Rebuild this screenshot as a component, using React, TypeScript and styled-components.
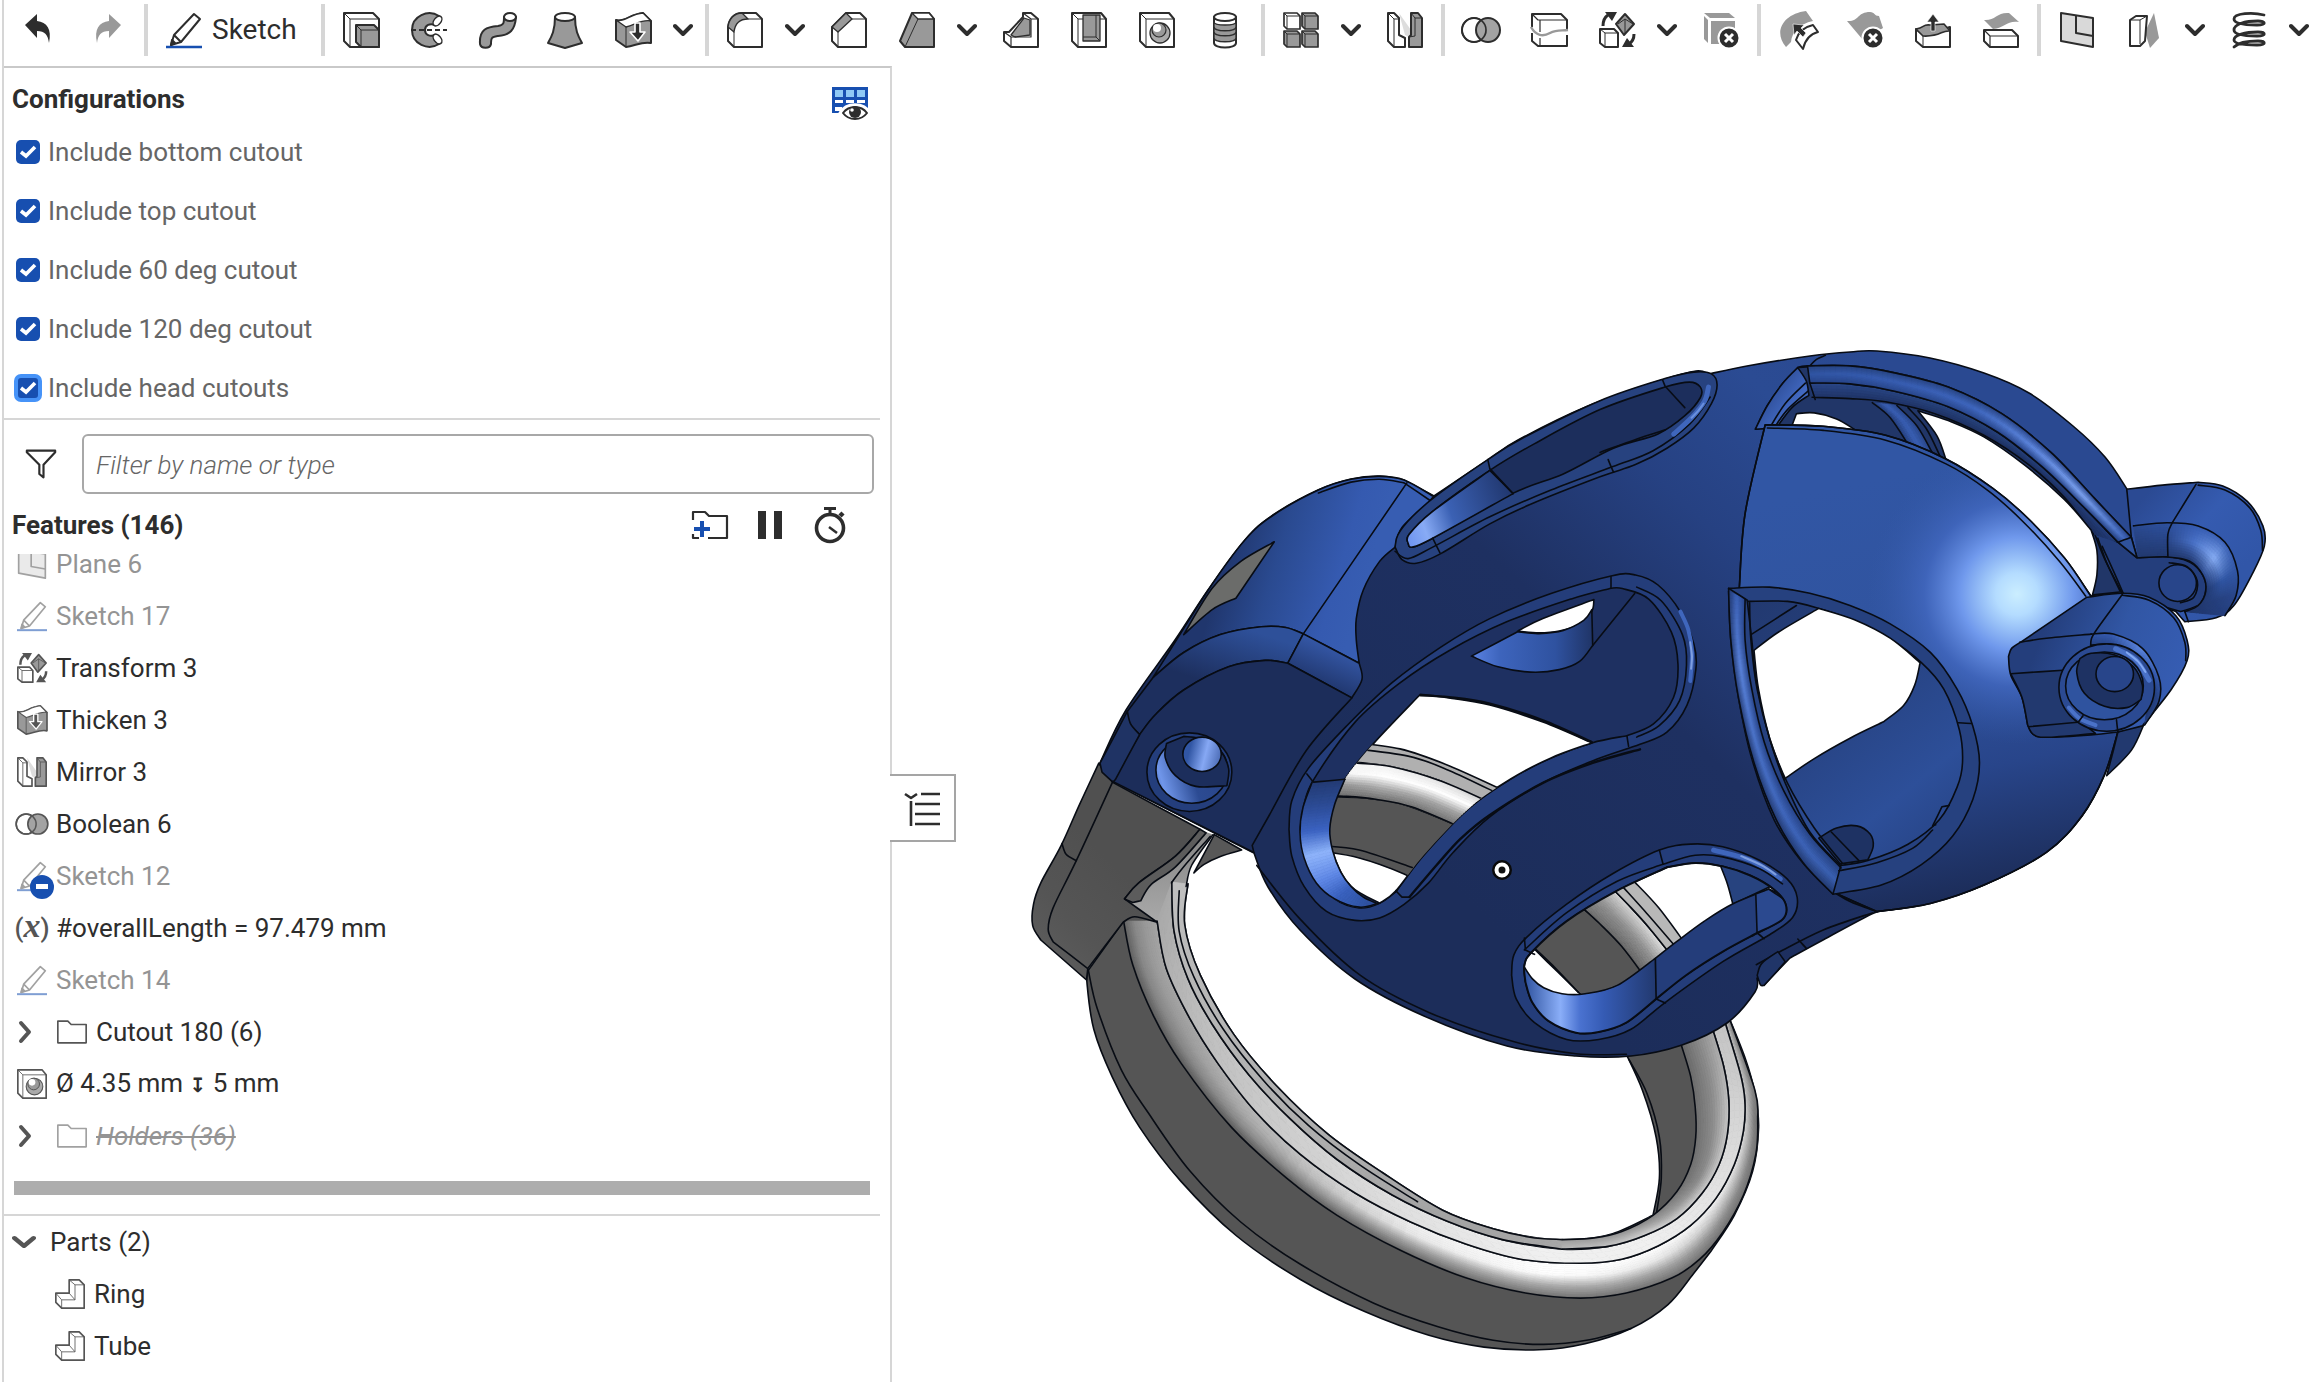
import React from 'react';
import styled, { createGlobalStyle } from 'styled-components';

const INK = '#2d2d2d';
const MUTED = '#949494';
const BLUE = '#174fb0';

const Global = createGlobalStyle`
  *, *::before, *::after { box-sizing: border-box; }
  body { margin: 0; background: #fff; color: ${INK}; font: 400 26px/32px Roboto, "Noto Sans", sans-serif; overflow-x: hidden; }
  button { font: inherit; color: inherit; background: none; border: 0; padding: 0; cursor: pointer; }
`;

/* ---------- layout ---------- */

const Page = styled.div`
  display: flex;
  flex-direction: column;
  min-height: 100vh;
  margin-left: 2px;
  border-left: 2px solid #d6d6d6;
  overflow: hidden;
`;
const Toolbar = styled.header`
  display: flex;
  align-items: center;
  height: 66px;
  padding-bottom: 6px;
`;
const Divider = styled.span`
  flex: none;
  width: 4px;
  height: 52px;
  margin: 0 2px;
  background: #d6d6d6;
`;
const ToolButton = styled.button<{ $faded?: boolean }>`
  flex: none;
  display: grid;
  place-items: center;
  width: 68px;
  height: 60px;
  color: ${p => (p.$faded ? '#999' : INK)};
`;
const History = styled.div`
  display: flex;
  gap: 2px;
`;
const SketchButton = styled.button`
  flex: none;
  display: flex;
  align-items: center;
  gap: 10px;
  width: 169px;
  height: 60px;
  padding-left: 16px;
  font-size: 28px;
`;
const MenuButton = styled.button`
  flex: none;
  width: 36px;
  height: 60px;
  padding: 0 10px 0 6px;
  display: grid;
  place-items: center;
`;
const Body = styled.div`
  flex: 1;
  display: flex;
  align-items: stretch;
`;
const Panel = styled.aside`
  position: relative;
  flex: 0 0 888px;
  display: flex;
  flex-direction: column;
  border-top: 2px solid #c9c9c9;
  border-right: 2px solid #d6d6d6;
`;
const Section = styled.section<{ $last?: boolean }>`
  margin-right: 10px;
  border-bottom: ${p => (p.$last ? 'none' : '2px solid #d6d6d6')};
`;
const ConfigHead = styled.div`
  display: flex;
  align-items: flex-end;
  justify-content: space-between;
  padding: 9px 12px 3px 8px;
`;
const Heading = styled.h2`
  margin: 0;
  font-size: 26px;
  line-height: 44px;
  font-weight: 700;
`;
const IconButton = styled.button`
  display: grid;
  place-items: center;
  width: 36px;
  height: 36px;
`;
const Options = styled.div`
  display: flex;
  flex-direction: column;
  gap: 35px;
  padding: 16px 12px 18px;
`;
const Option = styled.label`
  display: flex;
  align-items: center;
  gap: 8px;
  height: 24px;
  color: #666;
`;
const Tick = styled.span`
  display: grid;
  width: 24px;
  height: 24px;
  > * { grid-area: 1 / 1; }
  svg { pointer-events: none; }
`;
const Box = styled.input<{ $focused?: boolean }>`
  appearance: none;
  width: 24px;
  height: 24px;
  margin: 0;
  border-radius: 5px;
  background: ${BLUE};
  outline: ${p => (p.$focused ? '4px solid #4693f8' : 'none')};
  outline-offset: -2px;
`;
const FilterRow = styled.div`
  display: flex;
  align-items: center;
  gap: 26px;
  padding: 14px 6px 0 22px;
`;
const FilterInput = styled.input`
  flex: 1;
  min-width: 0;
  height: 60px;
  padding: 2px 12px 0;
  border: 2px solid #a8a8a8;
  border-radius: 6px;
  font: italic 300 26px/32px Roboto, "Noto Sans", sans-serif;
  color: ${INK};
  &::placeholder { color: #666; opacity: 1; }
`;
const FeatureHead = styled.div`
  display: flex;
  align-items: center;
  justify-content: space-between;
  height: 60px;
  padding: 2px 32px 0 8px;
`;
const HeadTools = styled.div`
  display: flex;
  gap: 24px;
`;
const Scroller = styled.div`
  overflow: hidden;
`;
const Tree = styled.ul<{ $scrolled?: boolean }>`
  list-style: none;
  margin: ${p => (p.$scrolled ? '-16px 0 0' : '0')};
  padding: 0;
`;
const Item = styled.li<{ $muted?: boolean; $struck?: boolean; $indent?: boolean }>`
  display: flex;
  align-items: center;
  gap: 9px;
  height: 52px;
  padding-left: ${p => (p.$indent ? '50px' : '12px')};
  color: ${p => (p.$muted ? MUTED : INK)};
  span {
    line-height: 20px;
    font-style: ${p => (p.$struck ? 'italic' : 'normal')};
    text-decoration: ${p => (p.$struck ? 'line-through' : 'none')};
  }
`;
const Depth = styled.b`
  font: 700 20px/20px "DejaVu Sans", sans-serif;
`;
const Glyph = styled.i<{ $muted?: boolean }>`
  position: relative;
  display: grid;
  place-items: center;
  width: 31px;
  height: 31px;
  color: #555;
  opacity: ${p => (p.$muted ? 0.55 : 1)};
  font-style: normal;
`;
const Slot = styled.i`
  position: relative;
  display: block;
`;
const Badge = styled.b`
  position: absolute;
  left: 14px;
  top: 14px;
  width: 24px;
  height: 24px;
  border-radius: 50%;
  background: ${BLUE};
  display: grid;
  place-items: center;
  &::after { content: ""; width: 12px; height: 5px; background: #fff; }
`;
const Twist = styled.button`
  display: grid;
  place-items: center;
  width: 31px;
  height: 31px;
  padding-right: 14px;
  color: #555;
`;
const Variable = styled.i`
  width: 36px;
  margin: 0 -3px 0 -2px;
  font: normal 500 26px/32px Roboto, "Noto Sans", sans-serif;
  color: #555;
  text-align: center;
  white-space: nowrap;
`;
const VariableName = styled.b`
  font: italic 700 34px/28px "Liberation Serif", serif;
`;
const Rollback = styled.div`
  height: 14px;
  margin: 19px 10px 19px;
  background: #adadad;
`;
const PartsHead = styled.button`
  display: flex;
  align-items: center;
  gap: 14px;
  width: 100%;
  height: 52px;
  padding-left: 8px;
`;
const PanelTab = styled.button`
  position: absolute;
  left: 100%;
  top: 706px;
  width: 66px;
  height: 68px;
  padding-top: 4px;
  display: grid;
  place-items: center;
  background: #fff;
  border: 2px solid #a5a5a5;
  border-left: 0;
`;
const Viewport = styled.main`
  flex: 1;
  min-width: 0;
  svg { display: block; width: 100%; height: auto; }
`;

/* ---------- icons ---------- */

type P = { n: string; s?: number };
const G = '#999';
const icons: Record<string, React.ReactNode> = {
  undo: <path d="M5 13 17 2v7c10 1 15 8 12 22-1-8-4-12-12-12v7z" fill="currentColor" stroke="none" />,
  redo: <path d="M31 13 19 2v7C9 10 4 17 7 31c1-8 4-12 12-12v7z" fill="currentColor" stroke="none" />,
  pencil: <><path d="M28 2 34 7 15 30 5 33 8 23z M8 23l7 7" /><path d="M0 35h36" stroke={BLUE} strokeWidth="2.4" /><path d="m5 33 1-5 3 3z" fill="currentColor" /></>,
  extrude: <><path d="M1 1h29l6 6v28H7l-6-6z" fill="#fff" /><path d="m1 1 6 6h29M7 7v28" strokeWidth="1" /><path d="M13 13h18l5 5v17H18l-5-5z" fill={G} /><path d="m13 13 5 5h18M18 18v17" strokeWidth="1" /></>,
  revolve: <><path d="M28 4C17-3 1 4 1 18s16 21 27 14l-4-9c-5 2-10 0-10-5s5-7 10-5z" fill={G} /><ellipse cx="26.500" cy="9" rx="3.400" ry="5.600" transform="rotate(38 26.500 9)" fill="#fff" strokeWidth="1.500" /><ellipse cx="26.500" cy="27" rx="3.400" ry="5.600" transform="rotate(-38 26.500 27)" fill="#fff" strokeWidth="1.500" /><path d="M0 18h36" strokeDasharray="5 3" /></>,
  sweep: <><path d="M25 5c0 6 0 8-6 9C8 15 0 17 1 32c1 5 10 5 11 0 0-7 1-7 7-8 12-1 17-6 18-19z" fill={G} /><ellipse cx="31" cy="5" rx="6" ry="4" fill="#fff" /></>,
  loft: <><path d="M8 5C8 18 5 24 1 31l17 5 17-5C31 24 28 18 28 5z" fill={G} /><ellipse cx="18" cy="5" rx="10" ry="4" fill="#fff" /></>,
  thicken: <><path d="M1 8C9 11 15 2 28 1l8 8v22c-9-2-16 3-25 4L1 28z" fill={G} /><path d="M1 8C9 11 15 2 28 1l8 8c-9-2-16 4-25 6z" fill="#fff" strokeWidth="1.3" /><path d="M11 15v20" strokeWidth="1" /><path d="M20 11h5v9h5l-7 9-8-9h5z" fill="currentColor" stroke="#fff" strokeWidth="1.6" /></>,
  fillet: <><path d="M1 15C2 7 7 1 15 1h14l6 6v28H7l-6-6z" fill="#fff" /><path d="M1 15C2 7 7 1 15 1l6 6C12 7 8 12 7 20z" fill={G} strokeWidth="1.3" /><path d="M21 7h14M7 20v15" strokeWidth="1" /></>,
  chamfer: <><path d="M1 15 15 1h14l6 6v28H7l-6-6z" fill="#fff" /><path d="M1 15 15 1l6 6L7 20z" fill={G} strokeWidth="1.3" /><path d="M21 7h14M7 20v15" strokeWidth="1" /></>,
  draft: <><path d="M13 1h17l5 6v28H6l-5-6z" fill={G} /><path d="M13 1h17l5 6H19z" fill="#fff" strokeWidth="1.3" /><path d="M19 7 6 35" strokeWidth="1" /></>,
  rib: <><path d="M20 1h8l7 6v28H8l-7-6V20h5L20 5z" fill="#fff" /><path d="M8 23 21 6l6 2v15l-15 2z" fill={G} strokeWidth="1.3" /><path d="M28 7h7M20 1l8 6v18H8l-7-5M8 25v10" strokeWidth="1.2" /></>,
  shell: <><path d="M1 1h29l5 6v28H7l-6-6z" fill="#fff" /><path d="M12 3h17v26H12z" fill={G} strokeWidth="1.3" /><path d="M12 25h13l4 4M25 3v22M1 1l6 6h5M29 7h6M7 7v28" strokeWidth="1" /></>,
  hole: <><path d="M1 1h29l5 6v28H7l-6-6z" fill="#fff" /><path d="m1 1 6 6h28M7 7v28" strokeWidth="1" /><circle cx="21" cy="21" r="10" fill="#aaa" strokeWidth="1.3" /><circle cx="20" cy="18" r="7" fill={G} strokeWidth="1.2" /><circle cx="18" cy="16" r="4" fill="#fff" stroke="none" /></>,
  thread: <><path d="M7 5v26c0 6 22 6 22 0V5z" fill="#fff" /><path d="M7 10v16c0 5 22 5 22 0V10c0 4-22 4-22 0z" fill={G} strokeWidth="1.4" /><ellipse cx="18" cy="5" rx="11" ry="4" fill="#fff" /><path d="M7 15c0 5 22 5 22 0M7 20c0 5 22 5 22 0" strokeWidth="1.4" /></>,
  pattern: <>{[[1, 1, '#fff'], [19, 1, G], [1, 19, G], [19, 19, G]].map(([x, y, f]) => <g key={`${x}-${y}`} strokeWidth="1.7" transform={`translate(${x} ${y})`}><path d="M0 0h13l3 3v13H3l-3-3z" fill={f as string} /><path d="m0 0 3 3h13M3 3v13" strokeWidth="1" /></g>)}</>,
  mirror: <><path d="M12 1 24 18v8l-6-3z" fill="#ddd" stroke="none" /><path d="M1 1h6l5 5v17l6 3v9H7l-6-6z" fill="#fff" /><path d="m1 1 6 6h5M7 7v28" strokeWidth="1" /><path d="M24 1h7l4 5v29H22V25l2-2z" fill={G} /><path d="M24 1l4 5h7M28 6v18l-6 1" strokeWidth="1" /></>,
  boolean: <><circle cx="11" cy="18" r="12" fill="#fff" /><circle cx="25" cy="18" r="12" fill={G} fillOpacity=".9" /><circle cx="11" cy="18" r="12" fill="none" strokeWidth="1.6" /></>,
  split: <><path d="M1 15V2h29l6 6v10M1 21v8l6 5h29V23" /><path d="m1 2 6 6h29M9 8v12M9 26v8" strokeWidth="1.2" /><path d="M0 15c5 9 12 10 19 6s12-2 18-3" stroke={G} strokeWidth="2.400" /></>,
  transform: <><path d="M1 17h14l4 4v14H6l-5-4z" fill="#fff" /><path d="m1 17 5 4h13M6 21v14" strokeWidth="1" /><path d="m26 2 9 10-10 11-8-11z" fill={G} /><path d="m19 12 7-5 8 5M26 7v15" strokeWidth="1" /><path d="M4 14C4 9 6 5 9 3M35 22c0 5-2 8-5 10" strokeWidth="3" /><path d="M6 0h12l-5 9zM23 35h12l-7-9z" fill="currentColor" strokeWidth="0" /></>,
  deletePart: <><path d="M1 1h25l6 5H7z" fill={G} stroke="none" /><path d="m1 4 4 4v23l-4-4zM8 9h24v23H8z" fill={G} stroke="none" /><circle cx="26" cy="26" r="10.500" fill="currentColor" stroke="#fff" /><path d="m22 22 8 8m0-8-8 8" stroke="#fff" strokeWidth="3" /></>,
  modify: <><path d="M7 35C-6 20 4 2 27-1l7 10C20 12 13 20 12 30z" fill={G} stroke="none" /><path d="M34 13 39 20c-8 2-13 8-15 17l-7-9c2-7 8-13 17-15z" fill="#fff" /><path d="m14 12 11 1-3 3 5 5-3 4-6-6-3 4z" fill="currentColor" stroke="#fff" strokeWidth=".6" /></>,
  deleteFace: <><path d="M0 9C12 10 10 0 23 0c5 0 4 4 9 4l4 12-20 12z" fill={G} stroke="none" /><circle cx="26" cy="26" r="10.500" fill="currentColor" stroke="#fff" /><path d="m22 22 8 8m0-8-8 8" stroke="#fff" strokeWidth="3" /></>,
  move: <><path d="M1 17 8 23l27-8v20H8l-7-6z" fill="#fff" /><path d="M1 17c9-1 6-5 14-4l14-1 6 7c-9-1-9 6-27 5z" fill={G} strokeWidth="1.600" /><path d="M8 24v11" strokeWidth="1" /><path d="m18 2 6 8h-4v9h-4v-9h-4z" fill="currentColor" stroke="#fff" strokeWidth=".6" /></>,
  replace: <><path d="M1 18h28l6 6v11H7l-6-6z" fill="#fff" /><path d="m1 18 6 6h28M7 24v11" strokeWidth="1.2" /><path d="M1 8C12 9 14 0 26 1l10 9c-12-2-14 6-26 7z" fill={G} stroke="none" /></>,
  plane: <><path d="m2 1 32 5v29L2 29z" fill="#d9d9d9" /><path d="M17 4v17l17 3" /></>,
  curve: <><path d="m27 1 5 25-9 10-5-16z" fill={G} stroke="none" /><path d="M9 4h11l-1 12-1 13-5 5H3V8z" fill="#fff" /><path d="M3 8h10l7-4M13 8v24" strokeWidth="1" /></>,
  helix: <path d="M33 3C22 0 3 1 3 7c0 5 12 6 23 6 10 0 9-4 1-4C14 9 3 12 3 18c0 5 12 6 23 6 10 0 9-4 1-4C14 20 3 23 3 28c0 4 12 5 23 5 10 0 9-4 1-4-10 0-20 2-24 6" strokeWidth="2.800" strokeLinecap="round" />,
  folder: <path d="M1 5h12l4 4h18v22H1z" />,
  part: <><path d="M17 1h12l6 6v28H8l-7-7V17h16z" fill="#fff" /><path d="m17 1 7 6h11M24 7v18l-7-8M24 25H8l-7-8M8 25v10" strokeWidth="1" /></>,
  funnel: <path d="M1 2h34v2L21 19v15l-5-4V19L1 4z" strokeWidth="2.6" />,
  table: <><path d="M0 2h36v26H0z" fill={BLUE} stroke="none" /><path d="M3 5h8v7H3zM14 5h8v7h-8zM25 5h8v7h-8z" fill="#8fc9f5" stroke="none" /><path d="M3 15h8v3H3zM14 15h8v3h-8zM25 15h8v3h-8zM3 22h7v4H3z" fill="#fff" stroke="none" /><path d="M8 28C14 17 32 17 38 28c-6 10-24 10-30 0z" fill="#fff" stroke="#fff" strokeWidth="3" /><path d="M11 28c6-8 18-8 24 0-6 8-18 8-24 0z" fill="#fff" /><circle cx="23" cy="27" r="6" fill={INK} stroke="none" /><circle cx="20" cy="25" r="1.8" fill="#fff" stroke="none" /></>,
  addFolder: <><path d="M1 13V5h12l4 4h18v22H16M7 31H1v-4" strokeWidth="2.2" /><path d="M10 14v16M2 22h16" stroke={BLUE} strokeWidth="4" /></>,
  pause: <path d="M6 4h8v28H6zM22 4h8v28h-8z" fill="currentColor" stroke="none" />,
  watch: <><circle cx="18" cy="21" r="13.5" strokeWidth="3.6" /><path d="M12 1.500h12M18 2v5" strokeWidth="3" /><path d="m28 9 3-3" strokeWidth="4.500" /><path d="m17 20 8 6" strokeWidth="2.500" /></>,
  list: <path d="M1 2l6 4 6-4M7 9v25M17 2h19M11 12h25M11 22h25M11 32h25" strokeWidth="2.600" />,
};
const Icon = ({ n, s = 36 }: P) => (
  <svg width={s} height={s} viewBox="0 0 36 36" fill="none" stroke="currentColor" strokeWidth="2" strokeLinejoin="round" overflow="visible" aria-hidden="true">{icons[n]}</svg>
);
const Chevron = ({ right, wide }: { right?: boolean; wide?: boolean }) => (
  <svg width={right ? 14 : wide ? 24 : 20} height={right ? 24 : 14} viewBox={right ? '0 0 14 24' : '0 0 20 14'} fill="none" stroke={wide ? '#555' : 'currentColor'} strokeWidth="4" strokeLinecap="round" strokeLinejoin="round" preserveAspectRatio="none" aria-hidden="true">
    <path d={right ? 'M3 3l8 9-8 9' : 'M2 3l8 8 8-8'} />
  </svg>
);

/* ---------- model drawing ---------- */

type Pt = [number, number];
type Frame = { x: number; y: number; sx: number; sy: number };
// Each view frame has its own local grid; points are mapped from it to model space.
const W: Frame = { x: 0, y: 0, sx: 1, sy: 1 };
const CLASP: Frame = { x: 1000, y: 440, sx: 2.45, sy: 2.8 };
const HEAD: Frame = { x: 1600, y: 330, sx: 2.24, sy: 2.45 };
const RING: Frame = { x: 1080, y: 840, sx: 2.178, sy: 2.958 };

const parse = (f: Frame, s: string): Pt[] =>
  s.trim().split(/\s+/).map(p => {
    const [a, b] = p.split(',').map(Number);
    return [f.x + a / f.sx, f.y + b / f.sy] as Pt;
  });
const r1 = (v: number) => Math.round(v * 10) / 10;
// Smooth curve through the points; "|" marks a sharp corner.
function curve(f: Frame, s: string): string {
  let out = '';
  let last: Pt | null = null;
  s.split('|').filter(t => t.trim()).forEach(seg => {
    let p = parse(f, seg);
    if (last) p = [last, ...p];
    else out = `M${r1(p[0][0])} ${r1(p[0][1])}`;
    for (let i = 0; i < p.length - 1; i++) {
      const a = p[Math.max(0, i - 1)], b = p[i], c = p[i + 1], d = p[Math.min(p.length - 1, i + 2)];
      out += `C${r1(b[0] + (c[0] - a[0]) / 6)} ${r1(b[1] + (c[1] - a[1]) / 6)} ${r1(c[0] - (d[0] - b[0]) / 6)} ${r1(c[1] - (d[1] - b[1]) / 6)} ${r1(c[0])} ${r1(c[1])}`;
    }
    last = p[p.length - 1];
  });
  return out;
}
const Face = ({ f, d, fill, line = true }: { f: Frame; d: string; fill: string; line?: boolean }) => (
  <path d={curve(f, d) + 'Z'} fill={fill} stroke={line ? '#080c14' : 'none'} />
);
const Edge = ({ f, d, w = 1.6, c = '#080c14' }: { f: Frame; d: string; w?: number; c?: string }) => (
  <path d={curve(f, d)} fill="none" stroke={c} strokeWidth={w} strokeLinecap="round" />
);
const Oval = ({ f, x, y, rx, ry, fill = 'none' }: { f: Frame; x: number; y: number; rx: number; ry: number; fill?: string }) => (
  <ellipse cx={f.x + x / f.sx} cy={f.y + y / f.sy} rx={rx / f.sx} ry={ry / f.sy} fill={fill} stroke="#080c14" />
);

const rail = (p: Pt[], n: number): Pt[] =>
  Array.from({ length: n + 1 }, (_, k) => {
    const t = (k / n) * (p.length - 1);
    const i = Math.min(p.length - 2, Math.floor(t));
    const u = t - i;
    const a = p[Math.max(0, i - 1)], b = p[i], c = p[i + 1], d = p[Math.min(p.length - 1, i + 2)];
    const h = (j: 0 | 1) =>
      0.5 * (2 * b[j] + (c[j] - a[j]) * u + (2 * a[j] - 5 * b[j] + 4 * c[j] - d[j]) * u * u + (3 * b[j] - a[j] - 3 * c[j] + d[j]) * u * u * u);
    return [h(0), h(1)] as Pt;
  });
const rgb = (h: string) => [1, 3, 5].map(i => parseInt(h.slice(i, i + 2), 16));
const mix = (a: number[], b: number[], t: number) => a.map((v, i) => v + (b[i] - v) * t);
const pick = (row: number[][], t: number) => {
  if (row.length === 1) return row[0];
  const u = t * (row.length - 1);
  const i = Math.min(row.length - 2, Math.floor(u));
  return mix(row[i], row[i + 1], u - i);
};
// Shaded surface between two rails. Each tone row runs across, rows run along.
function Loft({ f, a, b, tones, n = 60, m = 14 }: { f: Frame; a: string; b: string; tones: string[]; n?: number; m?: number }) {
  const A = rail(parse(f, a), n), B = rail(parse(f, b), n);
  const rows = tones.map(t => t.split(' ').map(rgb));
  const cells: React.ReactNode[] = [];
  const at = (k: number, v: number): Pt => [A[k][0] + (B[k][0] - A[k][0]) * v, A[k][1] + (B[k][1] - A[k][1]) * v];
  for (let k = 0; k < n; k++) {
    for (let j = 0; j < m; j++) {
      const t = rows.length === 1 ? 0 : ((k + 0.5) / n) * (rows.length - 1);
      const i = Math.min(Math.max(rows.length - 2, 0), Math.floor(t));
      const v = (j + 0.5) / m;
      const c = rows.length === 1 ? pick(rows[0], v) : mix(pick(rows[i], v), pick(rows[i + 1], v), t - i);
      const col = `rgb(${c.map(Math.round).join(',')})`;
      const q = [at(k, j / m), at(k + 1, j / m), at(k + 1, (j + 1) / m), at(k, (j + 1) / m)];
      cells.push(<path key={`${k}-${j}`} d={'M' + q.map(p => p.map(r1).join(' ')).join('L') + 'Z'} fill={col} stroke={col} strokeWidth="0.8" />);
    }
  }
  return <g>{cells}<Edge f={f} d={a} /><Edge f={f} d={b} /></g>;
}

const Lin = ({ id, x1, y1, x2, y2, stops }: { id: string; x1: number; y1: number; x2: number; y2: number; stops: string }) => (
  <linearGradient id={id} gradientUnits="userSpaceOnUse" x1={x1} y1={y1} x2={x2} y2={y2}>
    {stops.split(' ').map(s => { const [o, c] = s.split(':'); return <stop key={o} offset={o} stopColor={c} />; })}
  </linearGradient>
);

const OPEN_BIG = '735,1090 745,1020 770,948 870,790 980,680 1100,590 1240,510 1400,445 1497,415|1525,416 1590,446 1645,538 1661,629 1650,721 1601,795 1536,828|1450,848 1350,890 1250,950 1150,1030 1040,1160 970,1265|930,1297 880,1310 820,1285 765,1215 735,1090';
const GAP_BIG = '1030,712 915,850 845,950 815,1030 808,1090 820,1170 860,1250 930,1297|970,1262 1040,1160 1150,1030 1250,950 1350,890 1450,848|1330,790 1200,742 1100,722 1030,712';
const OPEN_LOW = '970,420 968,370 985,330 1060,240 1170,150 1280,80|1340,68 1400,78 1460,105 1510,145 1537,190 1530,235 1475,275|1400,330 1320,400 1255,470|1190,540 1130,568 1080,570 1020,535 985,480 970,420';
const DOME = '370,232|500,236 640,258 775,316 880,388 960,463 1040,558 1097,648|1160,800|1160,985|1130,1090 1080,1190 1000,1280 860,1360 740,1405 620,1425|528,1380|400,1000|312,632|325,450 370,232';

function Model() {
  return (
    <svg viewBox="892 66 1424 1316" preserveAspectRatio="xMinYMin meet" strokeWidth="1.6" strokeLinejoin="round" role="img" aria-label="Ring and tube assembly">
      <defs>
        <Lin id="tube" x1={1420} y1={860} x2={1880} y2={360} stops="0:#1c2d5a 0.4:#1e3061 0.65:#264182 0.85:#2b4b93 1:#2a4991" />
        <radialGradient id="glow" gradientUnits="userSpaceOnUse" cx="2017" cy="594" r="150">
          <stop offset="0" stopColor="#cbeeff" /><stop offset=".14" stopColor="#b4dcff" /><stop offset=".38" stopColor="#6f98ec" /><stop offset=".62" stopColor="#4268c0" stopOpacity=".8" /><stop offset="1" stopColor="#3358a8" stopOpacity="0" />
        </radialGradient>
        <Lin id="dome" x1={1870} y1={480} x2={1960} y2={895} stops="0:#3156a4 0.45:#30539e 0.72:#28458a 1:#1c2d5a" />
        <Lin id="top" x1={1225} y1={560} x2={1360} y2={600} stops="0:#20366d 0.35:#2a4a90 0.8:#355ab0 1:#375db2" />
        <Lin id="band" x1={1250} y1={630} x2={1230} y2={690} stops="0:#2e5099 1:#1d2f5e" />
        <Lin id="bandR" x1={1345} y1={640} x2={1325} y2={688} stops="0:#3a60b5 1:#20366d" />
        <Lin id="lens" x1={1700} y1={560} x2={1960} y2={880} stops="0:#203568 0.45:#26417f 0.75:#2d4f99 1:#243e7c" />
        <Lin id="slotLit" x1={1400} y1={530} x2={1512} y2={490} stops="0:#6a90ee 0.2:#88abf5 0.45:#3b61b4 1:#20366d" />
        <Lin id="bore" x1={1182} y1={780} x2={1222} y2={790} stops="0:#3156a4 0.4:#86a8f4 1:#2b4a92" />
        <Lin id="well" x1={1150} y1={800} x2={1215} y2={780} stops="0:#3156b0 0.25:#7096ea 0.7:#2c4b93 1:#2a478c" />
        <Lin id="hump" x1={1470} y1={650} x2={1592} y2={650} stops="0:#5c84e4 0.25:#3d64bc 0.7:#2f52a0 1:#203568" />
        <Lin id="lowLit" x1={1525} y1={1000} x2={1656} y2={1000} stops="0:#2f539f 0.27:#8aaef8 0.42:#4a72d0 0.6:#355bb4 1:#22396f" />
        <Lin id="cap" x1={1760} y1={400} x2={1800} y2={430} stops="0:#2c4b93 0.6:#4269c2 1:#2c4b93" />
        <Lin id="ear" x1={2150} y1={490} x2={2240} y2={570} stops="0:#2b4a93 0.5:#355bb0 1:#3156a8" />
        <Lin id="ear2" x1={2040} y1={640} x2={2190} y2={700} stops="0:#243e7c 0.45:#3156a4 1:#375eb6" />
        <Lin id="arm" x1={1050} y1={1000} x2={1150} y2={900} stops="0:#606060 0.5:#555555 1:#505050" />
        <Lin id="inner" x1={1180} y1={1000} x2={1180} y2={850} stops="0:#c9c9c9 1:#8c8c8c" />
        <clipPath id="gapBig"><path d={curve(CLASP, GAP_BIG)} /></clipPath>
        <clipPath id="openLow"><path d={curve(RING, OPEN_LOW)} /></clipPath>
      </defs>

      {/* ring */}
      <Face f={RING} fill="#555555" d="18,385 15,420 30,560 70,700 130,850 220,1010 340,1170 480,1300 620,1395 760,1465 880,1500 1000,1508 1100,1490 1200,1445 1280,1375 1335,1285 1375,1215|1425,1110 1465,980 1478,850 1470,750 1450,650 1415,530|1185,620|1225,740 1255,880 1262,1000 1248,1110|1160,1165 1080,1182 1000,1178 900,1150 790,1095 660,985 540,870 430,730 335,575 262,400 228,250 235,130|95,240" />
      <Edge f={RING} d="18,385 38,500 90,680 150,810 240,980 350,1130 480,1255 640,1370 780,1440 900,1480 1010,1492 1110,1478 1200,1445" />
      <Face f={CLASP} fill="#585858" d="525,1105|592,1148|540,1166 500,1188 475,1212" />
      <Face f={CLASP} fill="url(#inner)" d="522,1105 470,1190 456,1250 455,1340|440,1400|385,1350|305,1285|345,1290|370,1245 430,1180 490,1092" line={false} />
      <Loft f={RING} n={90} m={16}
        a="95,240 115,370 160,520 220,660 330,850 450,1000 560,1110 700,1215 840,1295 970,1340 1090,1355 1190,1340 1290,1295 1350,1240 1400,1160 1445,1050 1472,930 1476,830 1470,740 1415,530"
        b="168,240 188,380 240,530 300,660 380,800 480,930 600,1045 720,1130 840,1195 960,1240 1090,1252 1180,1240 1260,1200 1330,1140 1385,1060 1425,960 1445,860 1448,770 1438,690 1405,540"
        tones={['#606060 #8a8a8a #9a9a9a #a4a4a4', '#5a5a5a #858585 #9c9c9c #a8a8a8', '#5a5a5a #909090 #b0b0b0 #c0c0c0', '#666666 #a0a0a0 #e8e8e8 #f0f0f0', '#707070 #aaaaaa #ffffff #ffffff', '#707070 #a0a0a0 #e8e8e8 #ffffff', '#707070 #8e8e8e #c0c0c0 #f2f2f2', '#707070 #808080 #a8a8a8 #d0d0d0', '#777777 #8c8c8c #a8a8a8 #bababa']} />
      <Loft f={RING} n={90} m={3}
        a="168,240 188,380 240,530 300,660 380,800 480,930 600,1045 720,1130 840,1195 960,1240 1090,1252 1180,1240 1260,1200 1330,1140 1385,1060 1425,960 1445,860 1448,770 1438,690 1405,540"
        b="200,125 205,270 235,410 288,545 368,695 458,825 560,945 680,1050 800,1128 920,1182 1050,1210 1150,1202 1230,1170 1300,1120 1355,1045 1392,960 1410,870 1413,770 1402,670 1378,560"
        tones={['#a8a8a8', '#bcbcbc', '#cccccc', '#e0e0e0', '#f0f0f0', '#f0f0f0', '#e2e2e2', '#d4d4d4', '#c4c4c4']} />
      <Loft f={RING} n={90} m={6}
        a="200,125 205,270 235,410 288,545 368,695 458,825 560,945 680,1050 800,1128 920,1182 1050,1210"
        b="235,130 228,250 262,400 335,575 430,730 540,870 660,985 790,1095 900,1150 980,1175 1050,1182"
        tones={['#c0c0c0', '#b8b8b8', '#b0b0b0', '#a4a4a4', '#a8a8a8']} />
      <Loft f={RING}
        a="1050,1210 1150,1202 1230,1170 1300,1120 1355,1045 1392,960 1410,870 1413,770 1402,670 1378,560"
        b="1050,1182 1120,1177 1180,1158 1248,1110 1300,1040 1330,960 1341,880 1340,790 1330,700 1308,600"
        tones={['#b8b8b8 #a0a0a0', '#d8d8d8 #909090', '#d0d0d0 #8a8a8a #707070', '#c8c8c8 #8c8c8c #707070', '#a8a8a8 #8a8a8a #686868']} />
      <Edge f={RING} d="216,150 216,270 248,405 312,560 400,712 498,845 610,962 735,1070" />
      <Edge f={RING} d="1196,650 1235,750 1262,880 1266,1000 1256,1100" />

      {/* ring arm and clasp base */}
      <Edge f={CLASP} d="522,1105 470,1190 456,1250" />
      <Edge f={CLASP} d="515,1110 450,1195 420,1240" />
      <Face f={CLASP} fill="url(#arm)" d="242,905|195,1020 150,1135 100,1240 82,1300 80,1360 100,1400|212,1512|215,1480|302,1350|330,1335 385,1350|305,1285|340,1240 430,1165 490,1090|275,958" />
      <Face f={CLASP} fill="#5c5c5c" d="490,1090|430,1165 340,1240 305,1285|325,1295|345,1290|370,1245 430,1195 505,1100" />
      <Edge f={CLASP} d="275,960 187,1178 130,1310 118,1370 130,1405|215,1480" />
      <Edge f={CLASP} d="152,1130 162,1160 187,1178" />

      {/* tube body */}
      <Face f={W} fill="url(#tube)" d="1100,763|1126,710 1175,640 1208,590 1245,540 1273,515 1318,490 1351,479 1380,476 1404,480|1434,496|1488,460 1518,440 1588,406 1662,380 1696,371 1709,374|1747,366 1810,356 1850,352 1877,351 1930,358 1984,373 2029,393 2073,426 2105,457 2127,489|2150,600|2118,732|2104,775 2082,816 2046,852 1984,885 1930,903 1890,910|1874,913 1823,940 1790,958|1764,985|1757,978|1755,992 1727,1023 1682,1045 1631,1056 1576,1056 1507,1046 1424,1016 1355,979 1300,930 1268,887 1254,853|1112,781" />
      <Edge f={RING} d="385,75 480,235 610,400 760,510 940,595 1080,632 1190,634" />
      <Edge f={HEAD} d="528,1380 560,1400 620,1425" />
      <Edge f={HEAD} d="350,1555 400,1525 500,1470 610,1428" />
      <Edge f={HEAD} d="443,1492|462,1515" />
      <Edge f={HEAD} d="470,88 485,72 505,62" />

      {/* clasp */}
      <Face f={CLASP} fill="url(#top)" d="1062,158|990,112 930,102 860,110 780,140 670,210 600,280 510,420 375,665|450,595 540,545 640,523 700,525 743,543|880,625|873,560 873,500 890,420 930,340 968,300|985,245 1050,175" />
      <Edge f={CLASP} d="780,148 860,118 930,110 990,120|1052,168" />
      <Face f={CLASP} fill="url(#band)" d="375,665 450,595 540,545 640,523 700,525 743,543|705,625|650,617 560,635 450,700 380,770 342,825|315,790 312,760" />
      <Face f={CLASP} fill="url(#bandR)" d="743,543|880,625|887,670 862,722|705,625" />
      <Face f={CLASP} fill="#1c2d5a" d="342,825 380,770 450,700 560,635 650,617 705,625|862,722|750,870 660,1050 618,1135|622,1155|275,955" />
      <Face f={CLASP} fill="#1f3364" d="245,905|312,760|320,795 342,825|283,950|275,955 250,930" />
      <Edge f={CLASP} d="997,120|743,543" />
      <Face f={CLASP} fill="#6b6c6a" d="672,285|578,443|520,475 450,545|520,415 590,340 672,285" />
      <Oval f={CLASP} x={464} y={930} rx={104} ry={110} fill="#243e7c" />
      <Oval f={CLASP} x={470} y={925} rx={88} ry={92} fill="url(#well)" />
      <Face f={CLASP} fill="#1c2e5c" d="408,850 405,890 430,940 480,970 556,968|560,920 540,870 500,838 450,830" />
      <Oval f={CLASP} x={495} y={880} rx={47} ry={48} fill="url(#bore)" />

      {/* top slot */}
      <Face f={CLASP} fill="#27427f" d="968,300 975,265 1010,215 1070,155 1195,55 1280,-5 1470,-110 1629,-172 1700,-190 1743,-185 1757,-154 1743,-102 1700,-34 1634,23 1557,69 1470,103 1300,180 1200,235 1080,318 1020,345 985,335 968,300" />
      <Face f={CLASP} fill="#1c2e5c" d="1000,290 1002,265 1060,200 1200,85 1310,10 1470,-85 1629,-148 1689,-162 1716,-148 1716,-119 1678,-68 1612,-17 1503,23 1380,95 1255,150 1060,275 1010,300 1000,290" />
      <Face f={CLASP} fill="url(#slotLit)" d="1000,290 1002,265 1060,200 1200,85|1257,150|1060,275 1010,300 1000,290" />
      <Edge f={CLASP} d="1195,55|1200,80|1257,150" />
      <Edge f={CLASP} d="968,312 1000,332 1060,300 1200,215 1350,140 1500,75 1600,30 1690,-45 1740,-120" />
      <Edge f={HEAD} d="243,140 234,175 205,215 165,255" c="#3f66bc" w={5} />
      <Edge f={HEAD} d="232,180 220,198 205,215" c="#6a90de" w={2} />
      <Edge f={HEAD} d="140,122|146,138|190,190" />
      <Edge f={HEAD} d="0,300 80,268 145,245" />
      <Edge f={CLASP} d="1060,275|1078,316" />
      <Edge f={CLASP} d="1490,55|1503,90" />

      {/* large side opening */}
      <Face f={CLASP} fill="#243d7a" d="708,1090 715,1010 755,920 850,800 960,680 1080,580 1200,500 1350,430 1500,380 1557,378 1612,406 1667,481 1700,572 1705,641 1683,743 1634,818 1568,852 1460,895 1330,960 1200,1055 1110,1155 1050,1240 990,1300 930,1338 870,1345 800,1320 745,1250 715,1165 708,1090" />
      <Edge f={CLASP} d="1003,1280 1070,1190 1130,1115 1200,1050 1330,960 1450,905 1568,866" w={2.4} />
      <Face f={CLASP} fill="#1e3061" d={OPEN_BIG} />
      <Edge f={CLASP} d="1560,412 1620,450 1672,545 1682,630 1665,730 1615,800 1560,832" />
      <Edge f={HEAD} d="180,690 198,735 206,790 202,860" c="#3f66bc" w={4} />
      <Edge f={HEAD} d="202,765 206,800 204,830" c="#7f9fe0" w={2} />
      <Face f={CLASP} fill="#ffffff" d={GAP_BIG} />
      <g clipPath="url(#gapBig)">
        <Face f={CLASP} fill="#b0b0b0" d="850,845 980,865 1100,912 1260,995|1200,1020 1080,955 960,915 850,900" />
        <Face f={CLASP} fill="#555555" d="780,998 900,1003 1000,1025 1150,1095|1020,1240|990,1215 880,1170 780,1150" />
        <Loft f={CLASP} a="800,900 875,905 960,915 1080,955 1200,1015" b="780,996 850,998 920,1006 1010,1028 1140,1090" tones={['#ffffff #f0f0f0 #8a8a8a #707070', '#f0f0f0 #ffffff #aaaaaa #707070', '#d0d0d0 #ffffff #a0a0a0 #777777']} />
        <Edge f={CLASP} d="850,862 1000,885 1100,925 1220,990" />
        <Edge f={CLASP} d="790,1136 880,1148 1010,1197" />
      </g>
      <Loft f={CLASP} m={4} a="765,958 742,1030 735,1100 745,1170 775,1240 820,1285 880,1308 925,1298" b="845,950 820,1020 808,1090 815,1150 835,1210 860,1250 890,1280 925,1298" tones={['#22396f', '#2c4b95', '#3b63c2', '#8fb4fb', '#5f88e6', '#3a62c0', '#3156a8', '#2c4b95']} />
      <Edge f={CLASP} d="752,935|768,958|845,950" />
      <Edge f={CLASP} d="970,1262|985,1280|1003,1280" />
      <Face f={CLASP} fill="#ffffff" d="1268,535|1330,500 1455,447|1450,480 1420,515 1370,535 1320,540 1268,535" />
      <Face f={CLASP} fill="url(#hump)" d="1155,605|1268,537|1320,542 1380,533 1430,505 1450,475|1452,575|1420,620 1370,643 1300,650 1220,635 1155,605" />
      <Edge f={CLASP} d="1452,575|1555,430" />
      <Edge f={CLASP} d="1030,715 1100,720 1200,738 1330,785 1450,846" w={2.4} />
      <Edge f={CLASP} d="1497,383|1497,415" />
      <Edge f={CLASP} d="1536,828|1540,858" />

      {/* lower opening */}
      <Face f={RING} fill="#243d7a" d="940,400 945,340 975,285 1060,190 1160,100 1262,30 1330,12 1400,20 1480,60 1540,115 1562,170 1552,229 1502,280 1400,360 1275,480 1200,560 1130,590 1060,590 990,540 950,470 940,400" />
      <Edge f={RING} d="1380,30 1460,60 1525,115" c="#3f66bc" w={5} />
      <Edge f={RING} d="1440,48 1485,75 1515,102" c="#7f9fe0" w={2} />
      <Edge f={RING} d="968,325 1060,215 1170,122 1270,72 1340,45 1400,50 1480,85 1530,130" />
      <Face f={RING} fill="#ffffff" d={OPEN_LOW} />
      <g clipPath="url(#openLow)">
        <Face f={RING} fill="#555555" d="980,310 1040,390 1100,470|1230,400|1165,290 1090,195" />
        <Loft f={RING} a="1090,195 1130,245 1180,315 1230,405" b="1150,130 1200,200 1240,260 1290,345" tones={['#707070 #909090 #d0d0d0', '#606060 #909090 #e0e0e0']} />
        <Face f={RING} fill="#b8b8b8" d="1150,130 1200,200 1240,260 1290,345|1320,310|1260,200 1205,120" />
        <Edge f={RING} d="1180,135 1230,210 1300,320" />
        <Edge f={RING} d="990,320 1040,385 1085,450" />
        <Face f={RING} fill="#27437f" d="1393,70|1410,130 1422,190|1500,140|1550,120|1400,60" />
        <Face f={RING} fill="#243d7a" d="1253,350 1300,300 1360,240 1420,190 1500,145|1560,180|1475,300|1253,480" />
        <Face f={RING} fill="#2b498f" d="1472,160|1500,145|1550,190|1530,260|1475,285" />
        <Face f={RING} fill="url(#lowLit)" d="965,370 985,410 1010,437 1050,455 1100,455 1170,430 1253,350|1255,480|1190,600|1000,600|940,440" />
      </g>
      <path d={curve(RING, OPEN_LOW)} fill="none" stroke="#080c14" strokeWidth="2" />
      <Edge f={RING} d="1255,470|1275,482" />
      <Edge f={RING} d="1475,275|1490,292" />
      <Edge f={RING} d="1262,30|1270,72" />
      <Edge f={RING} d="968,290|970,325|990,338" />
      <Face f={RING} fill="#203568" d="1475,400 1485,365 1520,330|1536,360|1520,385 1490,430|1482,428 1475,400" />

      {/* upper ear behind the head band */}
      <Face f={HEAD} fill="url(#ear)" d="1180,390|1260,380 1340,373|1395,382 1450,420 1485,480 1488,530 1460,600 1420,675 1380,705 1310,715|1290,690|1170,645|1103,650|1113,600 1113,540 1100,490|1190,508" />

      {/* head opening, top */}
      <Face f={HEAD} fill="#213668" d="348,243 375,185 410,130 443,92|465,88 560,88 660,105 780,140 900,205 1010,300 1110,415 1190,508|1203,558|1180,640|1095,650|1000,520 900,410 780,325 620,265 500,245 370,238" />
      <Face f={HEAD} fill="#243e7c" d="1203,558|1280,556 1330,575 1357,620 1345,670 1300,690|1240,670 1170,645|1130,560 1105,490|1160,520" />
      <Loft f={HEAD} a="1195,480 1270,472 1340,480 1400,520 1428,590 1425,650 1400,700" b="1205,558 1270,556 1320,566 1350,600 1357,640 1340,675 1310,690" tones={['#2a488d #22396f', '#2f52a0 #22396f', '#355bb0 #4a72c8 #22396f', '#3a60b5 #8ab0f6 #2a488d', '#3156a4 #3156a4 #22396f', '#2a478c #22396f', '#243e7c #203568']} />
      <Edge f={HEAD} d="1335,378|1282,472|1272,500 1272,556" />
      <Edge f={HEAD} d="1340,380 1400,392 1455,435 1480,490 1484,540" />
      <Edge f={HEAD} d="1310,690|1318,715" />
      <Oval f={HEAD} x={1294} y={620} rx={42} ry={45} fill="#28458a" />
      <Edge f={HEAD} d="1275,570 1315,580 1338,615 1330,655 1300,668" />
      <Loft f={HEAD} m={5} a="470,130 560,132 660,150 780,188 890,250 990,335 1080,430 1160,520" b="475,165 560,168 640,176 750,205 860,258 960,330 1040,410 1105,500" tones={['#2a478a #203568', '#28457f #1e3163', '#243e7c #1c2e5c']} />
      <Loft f={HEAD} a="465,88 560,88 660,105 780,140 900,205 1010,300 1110,415 1190,508" b="470,130 560,132 660,150 780,188 890,250 990,335 1080,430 1160,520" tones={['#26427f #3156a4 #28458a', '#26427f #355bae #28458a', '#26427f #3a60b5 #2a488d', '#26427f #4068c0 #2a488d', '#28458a #5f88e0 #28458a', '#28458a #80a6f4 #28458a', '#2a478a #4068c0 #243e7c']} />
      <Face f={HEAD} fill="#2f529c" d="1160,520|1190,508|1203,558" />
      <Face f={HEAD} fill="#ffffff" d="712,198 780,222 860,262 950,330 1040,415 1100,490|1113,540 1113,600 1103,650|1095,645 1040,560 960,465 880,390 775,318|755,260 712,198" />
      <Edge f={HEAD} d="1115,510 1135,570 1165,640" />
      <Edge f={HEAD} d="1125,530 1150,590 1172,645" />
      <Face f={HEAD} fill="#ffffff" d="440,205 480,203 530,218 572,245|500,240 430,234" />
      <Loft f={HEAD} n={24} m={8} a="610,178 650,215 690,280" b="665,185 710,235 745,302" tones={['#22396f #3a60b5 #2a478a', '#243e7c #3a60b5 #2a478a']} />
      <Edge f={HEAD} d="690,190 730,240 762,310" />
      <Face f={HEAD} fill="url(#cap)" d="443,92|462,125 468,160|430,190 395,240|348,243|375,185 410,130 443,92" />
      <Edge f={HEAD} d="460,130 415,180 380,240" />
      <Edge f={HEAD} d="466,150 420,195 390,240" />
      <Edge f={HEAD} d="443,92|465,90|470,130|482,170" />

      {/* head dome */}
      <Face f={HEAD} fill="url(#dome)" d={DOME} />
      <Face f={HEAD} fill="url(#glow)" d={DOME} />
      <Edge f={HEAD} d="375,240 500,246 640,270 775,328 870,394 950,472 1030,568 1088,652" />

      {/* front opening */}
      <Face f={HEAD} fill="#26417f" d="288,633|380,630 470,645 560,675 650,720 740,790 800,880 835,970 850,1060 835,1150 790,1240 720,1310 630,1360 522,1382|450,1300 390,1200 340,1050 310,900 293,760 288,633" />
      <Face f={HEAD} fill="url(#lens)" d="330,665|420,665 490,682 570,712 650,757 720,815 770,880 805,980 812,1060 800,1120 760,1200 690,1260 600,1300 538,1312|470,1230 415,1110 380,1000 350,860 340,760 330,665" />
      <Edge f={HEAD} d="340,745|440,675" />
      <Face f={HEAD} fill="#ffffff" d="345,785|400,740 490,682|570,710 650,755 717,815|705,870 680,920 635,960|560,1000 480,1050 413,1100|380,1000 355,880 345,785" />
      <Face f={HEAD} fill="#1e3263" d="490,1245 530,1220 575,1215 605,1235 612,1265 600,1298|538,1308" />
      <Edge f={HEAD} d="518,1230|580,1300" />
      <Edge f={HEAD} d="782,1165|766,1168|745,1215|752,1212" />
      <Loft f={HEAD} a="288,640 293,760 310,900 345,1060 395,1200 455,1305 520,1380" b="325,660 325,760 340,880 368,1010 412,1130 470,1235 540,1318" tones={['#22396f #3a60b5 #2a488d', '#22396f #5c84dc #2a488d', '#22396f #4a72c8 #28458a', '#22396f #3f66bc #28458a', '#22396f #3a60b0 #26427f']} />
      <Edge f={HEAD} d="335,668 338,760 352,880 380,1000 420,1110 480,1220 542,1305" />
      <Edge f={HEAD} d="535,1325 620,1305 700,1270 745,1225" />
      <Edge f={HEAD} d="522,1382|540,1310" />
      <Edge f={HEAD} d="288,633|330,662" />
      <Edge f={HEAD} d="803,962|832,964" />

      {/* lower ear */}
      <Face f={HEAD} fill="#22396f" d="1160,985|1220,962|1190,1030 1135,1092|1150,1030" />
      <Face f={HEAD} fill="url(#ear2)" d="915,800 922,780 945,763|1090,655|1170,645 1230,655 1290,700 1315,760 1315,810 1280,880 1215,970|1160,985|1100,992 1000,998 970,990 958,968|945,900 920,845 915,800" />
      <Face f={HEAD} fill="#22396f" d="920,842|1045,833|1032,880 1050,940 1082,965|1110,988|1000,998 970,990 958,968|945,900 920,842" />
      <Edge f={HEAD} d="960,972|1082,960" />
      <Loft f={HEAD} n={40} m={6} a="1100,745 1150,745 1215,780 1252,850 1252,910 1220,968" b="1100,772 1145,770 1195,790 1232,840 1240,890 1225,930" tones={['#3156a8 #26427f', '#3a60b8 #2a488d', '#6088de #4a72c8', '#3a60b5 #2f52a0', '#2a488d #243e7c', '#26427f #203568']} />
      <Edge f={HEAD} d="940,765 1000,755 1100,745" />
      <Edge f={HEAD} d="1170,648|1112,735 1100,760 1100,790" />
      <Edge f={HEAD} d="1170,650 1230,662 1285,705 1310,765 1312,810" />
      <Oval f={HEAD} x={1135} y={876} rx={107} ry={107} fill="#2b4a92" />
      <Edge f={HEAD} d="1155,781 1200,808 1230,858" c="#4a72c8" w={5} />
      <Edge f={HEAD} d="1180,790 1205,812 1222,838" c="#82a8f2" w={2} />
      <Edge f={HEAD} d="1050,925 1075,952 1110,968" c="#4a72c8" w={4} />
      <Oval f={HEAD} x={1130} y={872} rx={87} ry={83} fill="#2f539f" />
      <Face f={HEAD} fill="#1e3263" d="1075,805 1068,840 1085,890 1130,922 1180,925 1212,905|1215,870 1195,825 1150,795 1100,792 1075,805" />
      <Oval f={HEAD} x={1153} y={843} rx={42} ry={43} fill="#28458a" />
      <Edge f={HEAD} d="1082,945|1072,960" />
      <Edge f={HEAD} d="1157,955|1160,985" />

      {/* origin marker */}
      <circle cx="1502" cy="870" r="9" fill="#0a0a0a" stroke="#0a0a0a" strokeWidth="2" />
      <circle cx="1502" cy="870" r="5.500" fill="#111" stroke="#fff" strokeWidth="4" />
    </svg>
  );
}

/* ---------- page ---------- */

const tools = 'extrude revolve sweep loft thicken v | fillet v chamfer draft v rib shell hole thread | pattern v mirror | boolean split transform v deletePart | modify deleteFace move replace | plane curve v helix v'.split(' ');

const options = ['Include bottom cutout', 'Include top cutout', 'Include 60 deg cutout', 'Include 120 deg cutout', 'Include head cutouts'];

type Feature = { name: React.ReactNode; icon: string; muted?: boolean; struck?: boolean; folder?: boolean; badge?: boolean };
const features: Feature[] = [
  { name: 'Plane 6', icon: 'plane', muted: true },
  { name: 'Sketch 17', icon: 'pencil', muted: true },
  { name: 'Transform 3', icon: 'transform' },
  { name: 'Thicken 3', icon: 'thicken' },
  { name: 'Mirror 3', icon: 'mirror' },
  { name: 'Boolean 6', icon: 'boolean' },
  { name: 'Sketch 12', icon: 'pencil', muted: true, badge: true },
  { name: '#overallLength = 97.479 mm', icon: 'variable' },
  { name: 'Sketch 14', icon: 'pencil', muted: true },
  { name: 'Cutout 180 (6)', icon: 'folder', folder: true },
  { name: <>Ø 4.35 mm <Depth>↧</Depth> 5 mm</>, icon: 'hole' },
  { name: 'Holders (36)', icon: 'folder', folder: true, muted: true, struck: true },
];

export default function App() {
  return (
    <Page>
      <Global />
      <Toolbar>
        <History>
          <ToolButton aria-label="Undo"><Icon n="undo" /></ToolButton>
          <ToolButton aria-label="Redo" $faded><Icon n="redo" /></ToolButton>
        </History>
        <Divider />
        <SketchButton><Icon n="pencil" />Sketch</SketchButton>
        <Divider />
        {tools.map((t, i) =>
          t === '|' ? <Divider key={i} />
            : t === 'v' ? <MenuButton key={i} aria-label="More tools"><Chevron /></MenuButton>
              : <ToolButton key={i} aria-label={t}><Icon n={t} /></ToolButton>)}
      </Toolbar>
      <Body>
        <Panel>
          <Section>
            <ConfigHead>
              <Heading>Configurations</Heading>
              <IconButton aria-label="Configuration table"><Icon n="table" /></IconButton>
            </ConfigHead>
            <Options>
              {options.map((o, i) => (
                <Option key={o}>
                  <Tick>
                    <Box type="checkbox" defaultChecked $focused={i === 4} />
                    <svg width="24" height="24" viewBox="0 0 24 24" fill="none" stroke="#fff" strokeWidth="3.600"><path d="m5 12 5 4 9-9" /></svg>
                  </Tick>
                  {o}
                </Option>
              ))}
            </Options>
          </Section>
          <Section>
            <FilterRow>
              <Icon n="funnel" s={30} />
              <FilterInput placeholder="Filter by name or type" aria-label="Filter by name or type" />
            </FilterRow>
            <FeatureHead>
              <Heading>Features (146)</Heading>
              <HeadTools>
                <IconButton aria-label="Add folder"><Icon n="addFolder" /></IconButton>
                <IconButton aria-label="Pause"><Icon n="pause" /></IconButton>
                <IconButton aria-label="Regeneration times"><Icon n="watch" /></IconButton>
              </HeadTools>
            </FeatureHead>
            <Scroller>
              <Tree $scrolled>
                {features.map((ft, i) => (
                  <Item key={i} $muted={ft.muted} $struck={ft.struck}>
                    {ft.folder && <Twist aria-label="Expand"><Chevron right /></Twist>}
                    {ft.icon === 'variable'
                      ? <Variable>(<VariableName>x</VariableName>)</Variable>
                      : <Slot><Glyph $muted={ft.muted}><Icon n={ft.icon} s={30} /></Glyph>{ft.badge && <Badge />}</Slot>}
                    <span>{ft.name}</span>
                  </Item>
                ))}
              </Tree>
            </Scroller>
            <Rollback />
          </Section>
          <Section $last>
            <PartsHead><Chevron wide />Parts (2)</PartsHead>
            <Tree>
              {['Ring', 'Tube'].map(p => (
                <Item key={p} $indent><Glyph><Icon n="part" s={30} /></Glyph><span>{p}</span></Item>
              ))}
            </Tree>
          </Section>
          <PanelTab aria-label="Toggle feature list"><Icon n="list" /></PanelTab>
        </Panel>
        <Viewport><Model /></Viewport>
      </Body>
    </Page>
  );
}
